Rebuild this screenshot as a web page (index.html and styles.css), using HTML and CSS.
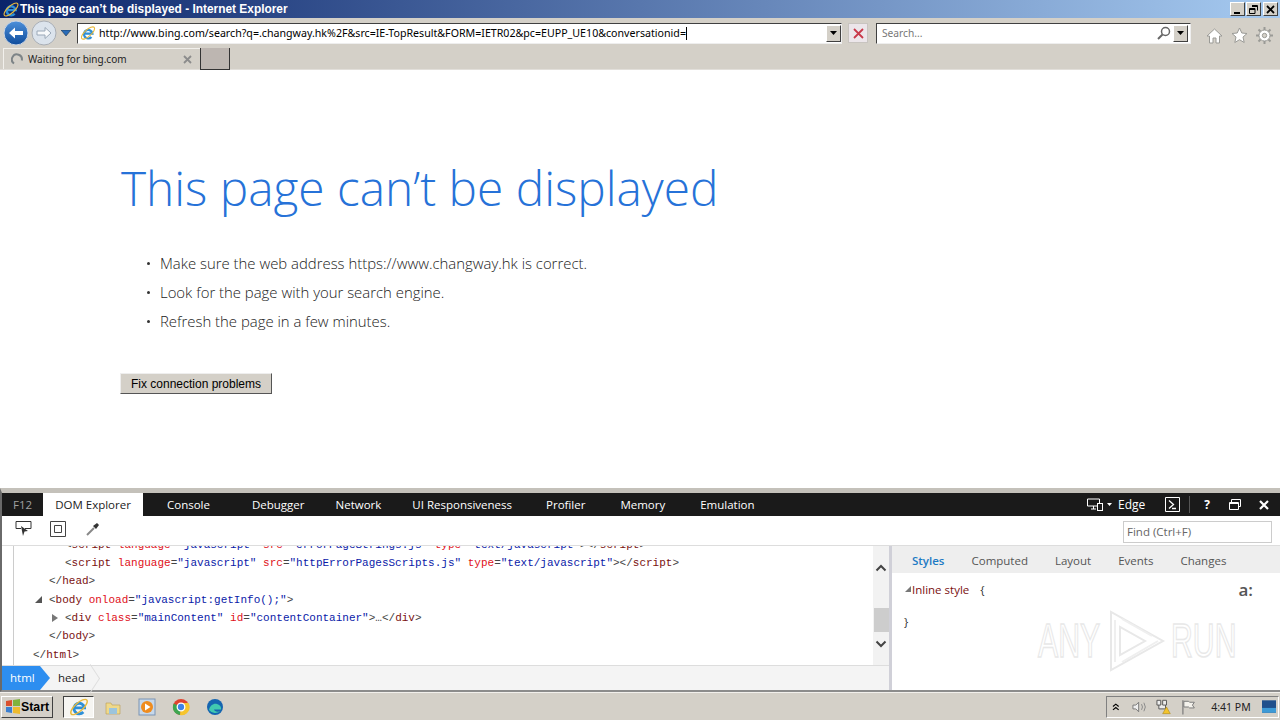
FILE: index.html
```html
<!DOCTYPE html>
<html lang="en">
<head>
    <meta charset="UTF-8">
    <title>This page can't be displayed - Internet Explorer</title>
    <link rel="stylesheet" href="styles.css">
</head>
<body>
    <svg class="defs" width="0" height="0">
        <symbol id="ie" viewBox="0 0 20 20">
            <path d="M5.200 10.800h10.300A5.300 5.300 0 1 0 14.300 15" fill="none" stroke="#2d8fd8" stroke-width="2.800"/>
            <ellipse cx="10" cy="10" rx="10.500" ry="4" transform="rotate(-42 10 10)" fill="none" stroke="#e8b93c" stroke-width="1.400"/>
        </symbol>
        <symbol id="caret" viewBox="0 0 7 4">
            <path d="M0 0h7L3.500 4z" fill="#000"/>
        </symbol>
    </svg>

    <header class="titlebar">
        <svg class="title-icon"><use href="#ie"/></svg>
        <span class="title-text">This page can’t be displayed - Internet Explorer</span>
        <div class="window-buttons">
            <button class="win-btn"><svg width="9" height="9" viewBox="0 0 9 9"><path d="M1 7h6v2H1z" fill="#000"/></svg></button>
            <button class="win-btn"><svg width="9" height="9" viewBox="0 0 9 9"><path d="M3 .5h5.500v5M3 1.500h5.500M.5 3.500h5.500v5H.5zM.5 4.500h5.500" fill="none" stroke="#000"/></svg></button>
            <button class="win-btn close-btn"><svg width="9" height="9" viewBox="0 0 9 9"><path d="M1 1l7 7M8 1L1 8" stroke="#000" stroke-width="1.800"/></svg></button>
        </div>
    </header>

    <div class="toolbar">
        <svg class="nav-btn" width="26" height="26" viewBox="0 0 26 26">
            <defs>
                <linearGradient id="backFill" x1="0" y1="0" x2="0" y2="1">
                    <stop offset="0" stop-color="#4d90da"/>
                    <stop offset="1" stop-color="#0f4c9c"/>
                </linearGradient>
            </defs>
            <circle cx="13" cy="13" r="12" fill="url(#backFill)" stroke="#c8d4e4"/>
            <path d="M6 13l6-5.500v3.500h8v4h-8v3.500z" fill="#fff"/>
        </svg>
        <svg class="nav-btn" width="26" height="26" viewBox="0 0 26 26">
            <circle cx="13" cy="13" r="12" fill="#dbe3ec" stroke="#a9aeb5"/>
            <path d="M20 13l-6-5.500v3.500H6v4h8v3.500z" fill="#f7f9fb" stroke="#9aa8b8"/>
        </svg>
        <svg class="nav-drop" width="10" height="6" viewBox="0 0 10 6"><path d="M0 0h10L5 6z" fill="#2a6cb8" stroke="#123" stroke-width=".5"/></svg>
        <div class="address">
            <svg class="addr-icon"><use href="#ie"/></svg>
            <span class="addr-url">http://www.bing.com/search?q=.changway.hk%2F&amp;src=IE-TopResult&amp;FORM=IETR02&amp;pc=EUPP_UE10&amp;conversationid=</span><span class="addr-caret"></span>
            <button class="drop-btn"><svg width="7" height="4"><use href="#caret"/></svg></button>
        </div>
        <button class="stop-btn"><svg width="11" height="11" viewBox="0 0 11 11"><path d="M1 1l9 9M10 1l-9 9" stroke="#c8394a" stroke-width="1.800"/></svg></button>
        <div class="searchbox">
            <span class="search-hint">Search...</span>
            <svg class="search-icon" width="14" height="14" viewBox="0 0 14 14"><circle cx="8.500" cy="5.500" r="4" fill="none" stroke="#666" stroke-width="1.500"/><path d="M5.500 8.500L1 13" stroke="#666" stroke-width="2"/></svg>
            <button class="drop-btn"><svg width="7" height="4"><use href="#caret"/></svg></button>
        </div>
        <div class="tool-icons">
            <svg width="17" height="17" viewBox="0 0 17 17"><path d="M1 9l7.500-7L16 9h-2.500v7h-3.500v-5H7v5H3.500V9z" fill="#fff" stroke="#9a9a96"/></svg>
            <svg width="17" height="17" viewBox="0 0 17 17"><path d="M8.500 1l2.300 5 5.200.5-4 3.500 1.200 5.500-4.700-2.800L3.800 15.500 5 10 1 6.500 6.200 6z" fill="#fff" stroke="#9a9a96"/></svg>
            <svg width="17" height="17" viewBox="0 0 17 17"><circle cx="8.500" cy="8.500" r="5.500" fill="#fff" stroke="#9a9a96" stroke-width="1"/><circle cx="8.500" cy="8.500" r="2.200" fill="#d4d0c8" stroke="#9a9a96"/><path d="M8.500 0v3M8.500 14v3M0 8.500h3M14 8.500h3M2.500 2.500l2 2M12.500 12.500l2 2M14.500 2.500l-2 2M4.500 12.500l-2 2" stroke="#9a9a96" stroke-width="2"/></svg>
        </div>
    </div>

    <div class="tabstrip">
        <div class="tab">
            <svg class="spinner" width="12" height="12" viewBox="0 0 12 12"><path d="M3 10.500A5 5 0 1 1 10.800 7.500" fill="none" stroke="#7d8487" stroke-width="2"/></svg>
            <span class="tab-label">Waiting for bing.com</span>
            <svg class="tab-close" width="9" height="9" viewBox="0 0 9 9"><path d="M1 1l7 7M8 1L1 8" stroke="#8c8c8c" stroke-width="1.800"/></svg>
        </div>
        <div class="new-tab"></div>
    </div>

    <main class="page">
        <h1>This page can’t be displayed</h1>
        <ul class="tips">
            <li>Make sure the web address https://www.changway.hk is correct.</li>
            <li>Look for the page with your search engine.</li>
            <li>Refresh the page in a few minutes.</li>
        </ul>
        <button class="fix-btn">Fix connection problems</button>
    </main>

    <section class="devtools">
        <nav class="dev-tabs">
            <span class="dev-tab f12">F12</span>
            <span class="dev-tab active">DOM Explorer</span>
            <span class="dev-tab t-console">Console</span>
            <span class="dev-tab t-debugger">Debugger</span>
            <span class="dev-tab t-network">Network</span>
            <span class="dev-tab t-ui">UI Responsiveness</span>
            <span class="dev-tab t-profiler">Profiler</span>
            <span class="dev-tab t-memory">Memory</span>
            <span class="dev-tab t-emulation">Emulation</span>
            <div class="dev-right">
                <svg width="16" height="13" viewBox="0 0 16 13"><path d="M.5 1h12v7H.5zM4 11h5M6.500 8v3" fill="none" stroke="#fff"/><rect x="10.500" y="5.500" width="5" height="7" fill="#1a1a1a" stroke="#fff"/></svg>
                <svg class="edge-caret" width="5" height="3" viewBox="0 0 5 3"><path d="M0 0h5L2.500 3z" fill="#fff"/></svg>
                <span class="edge-label">Edge</span>
                <svg class="console-icon" width="15" height="15" viewBox="0 0 15 15"><path d="M.5.5h14v14H.5z" fill="none" stroke="#fff"/><path d="M4 3.500L8.500 7.500 4 11.500M7 11.500h4" fill="none" stroke="#fff" stroke-width="1.300"/></svg>
                <span class="dev-sep"></span>
                <span class="help">?</span>
                <svg width="12" height="11" viewBox="0 0 12 11"><path d="M.5 3.500h9v7h-9zM.5 4.500h9M2.500 3.500V.5h9v7h-2" fill="none" stroke="#fff"/></svg>
                <svg class="dev-close" width="10" height="10" viewBox="0 0 10 10"><path d="M1 1l8 8M9 1L1 9" stroke="#fff" stroke-width="2.200"/></svg>
            </div>
        </nav>

        <div class="dev-tools-row">
            <svg width="17" height="17" viewBox="0 0 17 17"><path d="M1 1.500h15v7h-6M6 8.500H1v-7" fill="none" stroke="#333"/><path d="M6 6l7 5-3.500.5L8 16z" fill="#333"/></svg>
            <svg width="16" height="16" viewBox="0 0 16 16"><path d="M.5.500h15v15H.5zM4.500 4.500h7v7h-7z" fill="none" stroke="#444"/></svg>
            <svg width="14" height="14" viewBox="0 0 14 14"><path d="M1 13l7-7" stroke="#888" stroke-width="2"/><path d="M7 4l3 3 3-4-2-2z" fill="#333"/></svg>
            <div class="find-box">Find (Ctrl+F)</div>
        </div>

        <div class="dev-body">
            <div class="dom-pane">
                <div class="dom-main">
                    <div class="dom-gutter"></div>
                    <div class="dom-code">
                        <div class="code-lines">
                            <div class="line ind2"><b>&lt;</b><i>script</i> <em>language</em><b>=</b><u>"javascript"</u> <em>src</em><b>=</b><u>"errorPageStrings.js"</u> <em>type</em><b>=</b><u>"text/javascript"</u><b>&gt;&lt;/</b><i>script</i><b>&gt;</b></div>
                            <div class="line ind2"><b>&lt;</b><i>script</i> <em>language</em><b>=</b><u>"javascript"</u> <em>src</em><b>=</b><u>"httpErrorPagesScripts.js"</u> <em>type</em><b>=</b><u>"text/javascript"</u><b>&gt;&lt;/</b><i>script</i><b>&gt;</b></div>
                            <div class="line ind1"><b>&lt;/</b><i>head</i><b>&gt;</b></div>
                            <div class="line ind1"><span class="twisty open"></span><b>&lt;</b><i>body</i> <em>onload</em><b>=</b><u>"javascript:getInfo();"</u><b>&gt;</b></div>
                            <div class="line ind2"><span class="twisty closed"></span><b>&lt;</b><i>div</i> <em>class</em><b>=</b><u>"mainContent"</u> <em>id</em><b>=</b><u>"contentContainer"</u><b>&gt;…&lt;/</b><i>div</i><b>&gt;</b></div>
                            <div class="line ind1"><b>&lt;/</b><i>body</i><b>&gt;</b></div>
                            <div class="line ind0"><b>&lt;/</b><i>html</i><b>&gt;</b></div>
                        </div>
                    </div>
                    <div class="scrollbar">
                        <svg width="12" height="8" viewBox="0 0 12 8"><path d="M1.500 6.500L6 2l4.500 4.500" fill="none" stroke="#444" stroke-width="2"/></svg>
                        <div class="thumb"></div>
                        <svg width="12" height="8" viewBox="0 0 12 8"><path d="M1.500 1.500L6 6l4.500-4.500" fill="none" stroke="#444" stroke-width="2"/></svg>
                    </div>
                </div>
                <div class="crumbs">
                    <span class="crumb current">html</span>
                    <span class="crumb next">head</span>
                </div>
            </div>
            <aside class="style-pane">
                <div class="style-tabs">
                    <span class="style-tab selected">Styles</span>
                    <span class="style-tab">Computed</span>
                    <span class="style-tab">Layout</span>
                    <span class="style-tab">Events</span>
                    <span class="style-tab">Changes</span>
                </div>
                <div class="style-body">
                    <div class="style-rule"><span class="rule-twisty"></span><span class="rule-name">Inline style</span><span class="rule-brace">{</span><span class="font-toggle">a:</span></div>
                    <div class="rule-close">}</div>
                </div>
            </aside>
        </div>
    </section>

    <footer class="taskbar">
        <button class="start">
            <svg width="16" height="15" viewBox="0 0 16 15"><path d="M1 2l6-1v6H1z" fill="#d9502e"/><path d="M8 1l7-1v7H8z" fill="#7fb33c"/><path d="M1 8h6v6l-6-1z" fill="#3b7fd0"/><path d="M8 8h7v7l-7-1z" fill="#eebb2e"/></svg>
            <span>Start</span>
        </button>
        <div class="task-item active"><svg width="20" height="20"><use href="#ie"/></svg></div>
        <div class="task-item">
            <svg width="18" height="18" viewBox="0 0 18 18"><path d="M2 5h5l1 2h8v9H2z" fill="#efd98a" stroke="#b89c50" stroke-width=".6"/><path d="M5 10h8v6H5z" fill="#9cc4dc"/></svg>
        </div>
        <div class="task-item">
            <svg width="18" height="18" viewBox="0 0 18 18"><rect x="1" y="1" width="16" height="16" fill="#c7d8ea" stroke="#7b94b4"/><circle cx="9" cy="9" r="6" fill="#ef8c1f"/><path d="M7 5.500L12.500 9 7 12.500z" fill="#fff"/></svg>
        </div>
        <div class="task-item">
            <svg width="18" height="18" viewBox="0 0 18 18"><circle cx="9" cy="9" r="8" fill="#e0432f"/><path d="M9 9L1.700 5.500A8 8 0 0 0 8 17z" fill="#3ea650"/><path d="M9 5h7.400A8 8 0 0 1 8 17z" fill="#f6c52d"/><circle cx="9" cy="9" r="3.800" fill="#3f83e8" stroke="#fff" stroke-width="1.300"/></svg>
        </div>
        <div class="task-item">
            <svg width="18" height="18" viewBox="0 0 18 18"><circle cx="9" cy="9" r="8" fill="#1565b0"/><path d="M3 12c1-5 5-7 8-6 3 .8 4.500 3 4 5.500H8c.5 2 3.500 3 6.500 1.500A8 8 0 0 1 3 12z" fill="#41c9b0"/></svg>
        </div>
        <div class="tray">
            <svg class="tray-up" width="8" height="8" viewBox="0 0 8 8"><path d="M1 3.500L4 1l3 2.500M1 7l3-2.500L7 7" fill="none" stroke="#000" stroke-width="1.200"/></svg>
            <svg width="16" height="14" viewBox="0 0 16 14"><path d="M1 5h3l3-3v10L4 9H1z" fill="#eee" stroke="#777"/><path d="M10 4q2 3 0 6M12.500 2.500q3 4.500 0 9" fill="none" stroke="#888"/></svg>
            <svg width="17" height="17" viewBox="0 0 17 17"><path d="M1 2h4v5H1zM7 2h4v5H7zM3 7v4h7V7" fill="#eee" stroke="#555"/><path d="M11 9l4 7H7z" fill="#f3c42c" stroke="#a88415" stroke-width=".6"/></svg>
            <svg width="16" height="16" viewBox="0 0 16 16"><path d="M2 1v15" stroke="#777" stroke-width="1.200"/><path d="M3 2h5l1 1h5l-2 3 2 3H9L8 8H3z" fill="#f4f2ec" stroke="#777"/></svg>
            <span class="clock">4:41 PM</span>
            <svg width="15" height="13" viewBox="0 0 15 13"><rect width="15" height="13" fill="#20508c"/><rect x="0" y="8" width="15" height="5" fill="#3d9ad6"/></svg>
        </div>
    </footer>

    <div class="watermark">
        <span class="mark-word">ANY</span>
        <svg width="58" height="62" viewBox="0 0 58 62"><path d="M3 2v58l52-29zM12 17v28l25-14z" fill="#fff" stroke="#e8e8e8" stroke-width="2" fill-rule="evenodd"/><path d="M7 10v42M14 52l36-21M14 9l30 17" fill="none" stroke="#efefef" stroke-width="2"/></svg>
        <span class="mark-word">RUN</span>
    </div>
</body>
</html>
```

FILE: styles.css
```css
* {
    box-sizing: border-box;
}

html, body {
    margin: 0;
    height: 720px;
    overflow: hidden;
}

body {
    display: flex;
    flex-direction: column;
    background: #d4d0c8;
    font-family: "Noto Sans", sans-serif;
    position: relative;
}

button {
    font-family: inherit;
    padding: 0;
}

.defs {
    position: absolute;
}

/* window title */
.titlebar {
    height: 18px;
    display: flex;
    align-items: center;
    background: linear-gradient(to right, #0a246a, #a6caf0);
    color: #fff;
    padding-right: 2px;
}

.title-icon {
    width: 18px;
    height: 17px;
    margin-left: 2px;
}

.title-text {
    font: bold 11.9px "Liberation Sans", sans-serif;
}

.window-buttons {
    margin-left: auto;
    display: flex;
    gap: 1px;
}

.win-btn {
    width: 15px;
    height: 14px;
    display: flex;
    align-items: center;
    justify-content: center;
    background: #d4d0c8;
    border: 1px solid;
    border-color: #fff #404040 #404040 #fff;
}

.close-btn {
    margin-left: 1px;
}

/* address bar row */
.toolbar {
    height: 30px;
    display: flex;
    align-items: center;
    padding-left: 3px;
}

.nav-btn {
    margin-right: 2px;
    flex: none;
}

.nav-drop {
    margin: 0 6px 0 2px;
    flex: none;
}

.address {
    width: 765px;
    height: 21px;
    display: flex;
    align-items: center;
    background: #fff;
    border: 1px solid #404040;
    border-bottom-color: #eee;
    border-right-color: #eee;
    font-size: 10.65px;
    color: #000;
}

.addr-icon {
    width: 16px;
    height: 16px;
    margin: 0 3px 0 2px;
    flex: none;
}

.addr-url {
    white-space: nowrap;
}

.addr-caret {
    width: 1px;
    height: 13px;
    background: #000;
}

.drop-btn {
    width: 15px;
    height: 17px;
    margin-left: auto;
    display: flex;
    align-items: center;
    justify-content: center;
    background: #d4d0c8;
    border: 1px solid;
    border-color: #fff #404040 #404040 #fff;
    flex: none;
}

.stop-btn {
    width: 20px;
    height: 20px;
    margin-left: 6px;
    display: flex;
    align-items: center;
    justify-content: center;
    background: #ece6ea;
    border: 1px solid #c8c4c0;
}

.searchbox {
    width: 315px;
    height: 21px;
    margin-left: 8px;
    display: flex;
    align-items: center;
    background: #fff;
    border: 1px solid #404040;
    border-bottom-color: #eee;
    border-right-color: #eee;
    padding-left: 5px;
    font-size: 10.2px;
    color: #777;
}

.search-hint {
    flex: 1;
}

.search-icon {
    margin-right: 2px;
}

.searchbox .drop-btn {
    margin-left: 0;
    margin-right: 2px;
}

.tool-icons {
    display: flex;
    gap: 8px;
    margin-left: 15px;
    padding-top: 4px;
}

/* tabs */
.tabstrip {
    height: 22px;
    display: flex;
    align-items: stretch;
    border-bottom: 1px solid #e2dfda;
}

.tab {
    width: 197px;
    margin-left: 3px;
    display: flex;
    align-items: center;
    padding-left: 7px;
    border-top: 1px solid #f2f0ec;
    border-left: 1px solid #f2f0ec;
    font-size: 10px;
    color: #222;
}

.spinner {
    flex: none;
}

.tab-label {
    margin-left: 5px;
}

.tab-close {
    margin-left: auto;
    margin-right: 8px;
}

.new-tab {
    width: 30px;
    height: 22px;
    background: #bdb6b1;
    border: 1px solid #333;
    border-top: none;
}

/* error page */
.page {
    flex: none;
    height: 418px;
    background: #fff;
    padding: 88px 0 0 121px;
    overflow: hidden;
}

h1 {
    margin: 0;
    font-family: "Open Sans", sans-serif;
    font-weight: 300;
    font-size: 47.8px;
    line-height: 60px;
    color: #2672d8;
}

.tips {
    list-style: none;
    margin: 31px 0 0;
    padding: 0 0 0 39px;
    font-family: "Open Sans", sans-serif;
    font-weight: 300;
    font-size: 14.9px;
    line-height: 29px;
    color: #222;
}

.tips li {
    position: relative;
}

.tips li::before {
    content: "";
    position: absolute;
    left: -13px;
    top: 13px;
    width: 3px;
    height: 3px;
    border-radius: 50%;
    background: #333;
}

.fix-btn {
    display: block;
    width: 152px;
    height: 21px;
    margin: 37px 0 0 -1px;
    background: #d4d0c8;
    border: 1px solid;
    border-color: #eee #555 #555 #eee;
    font: 12px "Liberation Sans", sans-serif;
    color: #000;
}

/* F12 tools */
.devtools {
    height: 204px;
    background: #fff;
    border-top: 5px solid #c4c1ba;
    border-left: 2px solid #6a6a6a;
    border-bottom: 2px solid #8c8c8c;
    display: flex;
    flex-direction: column;
    font-family: "Open Sans", sans-serif;
}

.dev-tabs {
    height: 23px;
    background: #1a1a1a;
    display: flex;
    align-items: center;
    font-size: 11.5px;
    color: #fff;
    flex: none;
    padding-right: 11px;
}

.dev-tab {
    display: block;
    line-height: 23px;
    white-space: nowrap;
}

.f12 {
    width: 41px;
    text-align: center;
    color: #a0a0a0;
}

.active {
    width: 100px;
    text-align: center;
    background: #fff;
    color: #222;
    height: 23px;
}

.t-console {
    margin-left: 24px;
}

.t-debugger {
    margin-left: 42px;
}

.t-network,
.t-ui {
    margin-left: 31px;
}

.t-profiler {
    margin-left: 34px;
}

.t-memory,
.t-emulation {
    margin-left: 35px;
}

.dev-right {
    margin-left: auto;
    display: flex;
    align-items: center;
}

.edge-caret {
    margin-left: 4px;
}

.edge-label {
    margin-left: 6px;
    font-size: 12px;
}

.console-icon {
    margin-left: 20px;
}

.dev-sep {
    width: 1px;
    height: 17px;
    background: #555;
    margin-left: 9px;
}

.help {
    font-weight: 700;
    font-size: 12px;
    margin: 0 19px 0 14px;
}

.dev-close {
    margin-left: 18px;
}

.dev-tools-row {
    height: 30px;
    display: flex;
    align-items: center;
    gap: 18px;
    padding-left: 13px;
    border-bottom: 1px solid #ddd;
    flex: none;
}

.dev-tools-row svg {
    margin-bottom: 4px;
}

.dev-tools-row svg:nth-child(3) {
    margin-left: 2px;
}

.find-box {
    width: 149px;
    height: 22px;
    margin-left: auto;
    margin-right: 8px;
    margin-top: 3px;
    border: 1px solid #ccc;
    font-size: 11.5px;
    line-height: 20px;
    padding-left: 3px;
    color: #666;
}

.dev-body {
    flex: 1;
    display: flex;
    min-height: 0;
}

.dom-pane {
    width: 890px;
    display: flex;
    flex-direction: column;
    border-right: 3px solid #d0d0d8;
}

.dom-main {
    flex: 1;
    display: flex;
    min-height: 0;
    border-bottom: 1px solid #ddd;
}

.dom-gutter {
    width: 12px;
    border-right: 1px solid #ccc;
    flex: none;
}

.dom-code {
    flex: 1;
    overflow: hidden;
}

.code-lines {
    margin-top: -10.5px;
    font-family: "Liberation Mono", monospace;
    font-size: 11px;
    line-height: 18.35px;
}

.line {
    position: relative;
    white-space: nowrap;
}

.ind0 {
    padding-left: 19px;
}

.ind1 {
    padding-left: 35px;
}

.ind2 {
    padding-left: 51px;
}

.line b {
    font-weight: normal;
    color: #444;
}

.line i {
    font-style: normal;
    color: #7a1010;
}

.line em {
    font-style: normal;
    color: #e01020;
}

.line u {
    text-decoration: none;
    color: #0a1aa8;
}

.twisty {
    position: absolute;
    top: 5px;
}

.open {
    left: 21px;
    width: 0;
    height: 0;
    border-style: solid;
    border-width: 0 0 7px 7px;
    border-color: transparent transparent #555 transparent;
}

.closed {
    left: 38px;
    width: 0;
    height: 0;
    border-style: solid;
    border-width: 4px 0 4px 6px;
    border-color: transparent transparent transparent #777;
}

.scrollbar {
    width: 16px;
    flex: none;
    background: #f2f2f2;
    display: flex;
    flex-direction: column;
    align-items: center;
    padding-top: 18px;
}

.thumb {
    width: 15px;
    height: 24px;
    background: #cdcdcd;
    margin-top: 36px;
}

.scrollbar svg:last-child {
    margin-top: 8px;
}

.crumbs {
    height: 24px;
    display: flex;
    background: #f4f4f4;
    font-size: 11.5px;
    flex: none;
}

.crumb {
    line-height: 24px;
    color: #222;
}

.current {
    width: 48px;
    padding-left: 8px;
    color: #fff;
    background: #2d8ef0;
    clip-path: polygon(0 0, 38px 0, 48px 50%, 38px 100%, 0 100%);
}

.next {
    position: relative;
    padding-left: 8px;
    padding-right: 16px;
}

.next::after {
    content: "";
    position: absolute;
    right: 2px;
    top: 4px;
    width: 16px;
    height: 16px;
    border-top: 1px solid #ddd;
    border-right: 1px solid #ddd;
    transform: rotate(45deg) skew(12deg, 12deg);
}

.style-pane {
    flex: 1;
    display: flex;
    flex-direction: column;
}

.style-tabs {
    height: 27px;
    background: #eeeeee;
    display: flex;
    align-items: center;
    gap: 27px;
    padding: 1px 0 0 20px;
    font-size: 11.5px;
    color: #555;
}

.selected {
    font-weight: 600;
    color: #1d7ac4;
}

.style-body {
    padding: 7px 12px;
    font-size: 11.5px;
    color: #333;
}

.style-rule {
    display: flex;
    align-items: center;
    position: relative;
    height: 18px;
}

.rule-twisty {
    width: 0;
    height: 0;
    border-style: solid;
    border-width: 0 0 6px 6px;
    border-color: transparent transparent #777 transparent;
    margin-left: 1px;
    margin-right: 1px;
}

.rule-name {
    color: #7a1010;
}

.rule-brace {
    margin-left: 11px;
}

.font-toggle {
    margin-left: auto;
    margin-right: 15px;
    font-size: 17px;
    font-weight: 600;
    color: #555;
}

.rule-close {
    margin-top: 16px;
}

/* windows taskbar */
.taskbar {
    height: 28px;
    display: flex;
    align-items: center;
    padding-left: 1px;
    border-top: 1px solid #f2f0ec;
}

.start {
    width: 52px;
    height: 22px;
    display: flex;
    align-items: center;
    gap: 0;
    padding-left: 3px;
    background: #d4d0c8;
    border: 1px solid;
    border-color: #fff #404040 #404040 #fff;
    font: bold 12.3px "Liberation Sans", sans-serif;
    color: #000;
}

.task-item {
    width: 34px;
    display: flex;
    justify-content: center;
}

.task-item.active {
    width: 31px;
    height: 22px;
    margin: 0 2px 0 10px;
    align-items: center;
    background: #f6f5f2;
    border: 1px solid;
    border-color: #404040 #fff #fff #404040;
}

.tray {
    margin-left: auto;
    width: 173px;
    height: 22px;
    margin-right: 1px;
    display: flex;
    align-items: center;
    padding: 0 2px 0 5px;
    gap: 9px;
    border: 1px solid;
    border-color: #808080 #fff #fff #808080;
}

.tray-up {
    margin-right: 3px;
}

.clock {
    font-size: 10.5px;
    margin-left: 6px;
    margin-right: 2px;
    color: #222;
    white-space: nowrap;
}

/* sandbox logo over the style pane */
.watermark {
    position: absolute;
    left: 1038px;
    top: 610px;
    height: 62px;
    display: flex;
    align-items: center;
    gap: 5px;
}

.watermark svg {
    margin-left: 2px;
}

.mark-word {
    width: 63px;
    font-family: "Liberation Sans", sans-serif;
    font-size: 48px;
    line-height: 62px;
    color: #fff;
    -webkit-text-stroke: 1.5px #e8e8e8;
    transform: scaleX(0.63);
    transform-origin: left center;
    white-space: nowrap;
}
```
